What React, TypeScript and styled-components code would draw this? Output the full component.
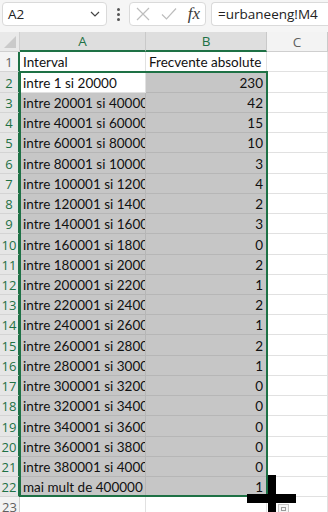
import React from "react";
import styled, { createGlobalStyle } from "styled-components";

const GREEN = "#1e7145";
const UI_FONT = `"Open Sans", "Noto Sans", Arial, sans-serif`;
const CELL_FONT = `Lato, "Open Sans", Arial, sans-serif`;

const Global = createGlobalStyle`
  html, body { margin: 0; padding: 0; background: #ffffff; overflow: hidden; }
  * { box-sizing: border-box; }
`;

const Frame = styled.div`
  position: relative;
  width: 328px;
  height: 512px;
  overflow: hidden;
  background: #ffffff;
`;

/* ---------- formula bar ---------- */

const FormulaBar = styled.div`
  height: 32px;
  background: #f5f5f5;
  display: flex;
  align-items: flex-start;
  padding: 2px 0 0 2px;
  font-family: ${UI_FONT};
  overflow: hidden;
  & > * { flex-shrink: 0; }
`;

const Box = styled.div`
  height: 24px;
  background: #ffffff;
  border: 1px solid #dadada;
  border-radius: 4px;
  display: flex;
  align-items: center;
`;

const NameBox = styled(Box)`
  width: 105px;
  padding: 0 6px 0 5px;
  justify-content: space-between;
  font-size: 13.5px;
  color: #222;
`;

const Kebab = styled.div`
  width: 22px;
  height: 24px;
  display: flex;
  flex-direction: column;
  align-items: center;
  justify-content: center;
  gap: 2px;
  & > span {
    width: 3px;
    height: 3px;
    border-radius: 50%;
    background: #555;
  }
`;

const FnBox = styled(Box)`
  width: 77px;
  padding: 0 5px 0 6px;
  justify-content: space-between;
`;

const Fx = styled.span`
  font-family: "Liberation Serif", "DejaVu Serif", serif;
  font-style: italic;
  font-size: 17px;
  color: #3a3a3a;
  line-height: 1;
  margin-top: -2px;
`;

const FormulaInput = styled(Box)`
  width: 130px;
  margin-left: 5px;
  padding-left: 6px;
  font-size: 13.5px;
  color: #222;
  border-right: none;
  border-radius: 4px 0 0 4px;
`;

/* ---------- sheet ---------- */

const Sheet = styled.div`
  position: relative;
`;

const SheetRow = styled.div<{ $h: number }>`
  display: grid;
  grid-template-columns: 20px 126px 121px 61px;
  height: ${(p) => p.$h}px;
`;

const Corner = styled.div`
  position: relative;
  background: #e9e9e9;
  border-right: 1px solid #cfcfcf;
  border-bottom: 1px solid #cfcfcf;
  &::after {
    content: "";
    position: absolute;
    right: 3px;
    bottom: 3px;
    width: 0;
    height: 0;
    border-left: 12px solid transparent;
    border-bottom: 12px solid #cacaca;
  }
`;

const ColHead = styled.div<{ $sel?: boolean }>`
  display: flex;
  align-items: center;
  justify-content: center;
  font-family: ${UI_FONT};
  font-size: 13.5px;
  color: ${(p) => (p.$sel ? GREEN : "#5f5f5f")};
  background: ${(p) => (p.$sel ? "#dedede" : "#f3f3f3")};
  border-right: 1px solid #c9c9c9;
  border-bottom: ${(p) => (p.$sel ? `2px solid ${GREEN}` : "1px solid #cfcfcf")};
`;

const RowNum = styled.div<{ $sel?: boolean; $mark?: boolean }>`
  display: flex;
  align-items: center;
  justify-content: center;
  font-family: ${UI_FONT};
  font-size: 13px;
  color: ${(p) => (p.$sel ? GREEN : "#5f5f5f")};
  background: ${(p) => (p.$sel ? "#e6e6e6" : "#f3f3f3")};
  border-bottom: 1px solid #d4d4d4;
  border-right: ${(p) => (p.$mark ? `2px solid ${GREEN}` : "1px solid #cfcfcf")};
  padding-top: 1px;
`;

const Cell = styled.div<{ $fill?: boolean; $num?: boolean }>`
  display: flex;
  align-items: center;
  justify-content: ${(p) => (p.$num ? "flex-end" : "flex-start")};
  padding: 1px 3px 0 3px;
  overflow: hidden;
  white-space: nowrap;
  font-family: ${CELL_FONT};
  font-size: 13.5px;
  color: #111;
  background: ${(p) => (p.$fill ? "#c6c6c6" : "#ffffff")};
  border-right: 1px solid ${(p) => (p.$fill ? "#b6b6b6" : "#e1e1e1")};
  border-bottom: 1px solid ${(p) => (p.$fill ? "#b6b6b6" : "#e1e1e1")};
`;

const Selection = styled.div`
  position: absolute;
  left: 19px;
  top: 39px;
  width: 249px;
  height: 426px;
  border: 2px solid ${GREEN};
  pointer-events: none;
`;

/* ---------- fill cursor ---------- */

const CursorV = styled.div`
  position: absolute;
  left: 268px;
  top: 475px;
  width: 8px;
  height: 40px;
  background: #000;
`;

const CursorH = styled.div`
  position: absolute;
  left: 247px;
  top: 494px;
  width: 49px;
  height: 9px;
  background: #000;
`;

const AutoFill = styled.div`
  position: absolute;
  left: 278px;
  top: 504px;
  width: 11px;
  height: 10px;
  background: #f4f4f4;
  border: 1px solid #c4c4c4;
  display: flex;
  align-items: center;
  justify-content: center;
  & > span {
    width: 5px;
    height: 4px;
    border: 1px solid #9a9a9a;
  }
`;

type Entry = [string, number];

const data: Entry[] = [
  ["intre 1 si 20000", 230],
  ["intre 20001 si 40000", 42],
  ["intre 40001 si 60000", 15],
  ["intre 60001 si 80000", 10],
  ["intre 80001 si 100000", 3],
  ["intre 100001 si 120000", 4],
  ["intre 120001 si 140000", 2],
  ["intre 140001 si 160000", 3],
  ["intre 160001 si 180000", 0],
  ["intre 180001 si 200000", 2],
  ["intre 200001 si 220000", 1],
  ["intre 220001 si 240000", 2],
  ["intre 240001 si 260000", 1],
  ["intre 260001 si 280000", 2],
  ["intre 280001 si 300000", 1],
  ["intre 300001 si 320000", 0],
  ["intre 320001 si 340000", 0],
  ["intre 340001 si 360000", 0],
  ["intre 360001 si 380000", 0],
  ["intre 380001 si 400000", 0],
  ["mai mult de 400000", 1],
];

// rows are 20.25px tall on average at this zoom
const tallRows = new Set([0, 4, 8, 13, 17]);

const Chevron = () => (
  <svg width="10" height="6" viewBox="0 0 10 6">
    <path d="M1 1 L5 5 L9 1" fill="none" stroke="#444" strokeWidth="1.2" />
  </svg>
);

const Cross = () => (
  <svg width="14" height="14" viewBox="0 0 14 14">
    <path d="M1 1 L13 13 M13 1 L1 13" stroke="#bdbdbd" strokeWidth="1.2" />
  </svg>
);

const Check = () => (
  <svg width="16" height="14" viewBox="0 0 16 14">
    <path d="M1 7.5 L5.5 12 L15 1.5" fill="none" stroke="#bdbdbd" strokeWidth="1.2" />
  </svg>
);

export default function App() {
  return (
    <Frame>
      <Global />
      <FormulaBar>
        <NameBox>
          <span>A2</span>
          <Chevron />
        </NameBox>
        <Kebab>
          <span />
          <span />
          <span />
        </Kebab>
        <FnBox>
          <Cross />
          <Check />
          <Fx>fx</Fx>
        </FnBox>
        <FormulaInput>=urbaneeng!M4</FormulaInput>
      </FormulaBar>

      <Sheet>
        <SheetRow $h={20}>
          <Corner />
          <ColHead $sel>A</ColHead>
          <ColHead $sel>B</ColHead>
          <ColHead>C</ColHead>
        </SheetRow>

        <SheetRow $h={20}>
          <RowNum $mark>1</RowNum>
          <Cell>Interval</Cell>
          <Cell>Frecvente absolute</Cell>
          <Cell />
        </SheetRow>

        {data.map(([label, value], i) => (
          <SheetRow key={i} $h={tallRows.has(i) ? 21 : 20}>
            <RowNum $sel $mark>
              {i + 2}
            </RowNum>
            <Cell $fill={i !== 0}>{label}</Cell>
            <Cell $fill $num>
              {value}
            </Cell>
            <Cell />
          </SheetRow>
        ))}

        <SheetRow $h={20}>
          <RowNum>23</RowNum>
          <Cell />
          <Cell />
          <Cell />
        </SheetRow>

        <Selection />
      </Sheet>

      <CursorV />
      <CursorH />
      <AutoFill>
        <span />
      </AutoFill>
    </Frame>
  );
}
